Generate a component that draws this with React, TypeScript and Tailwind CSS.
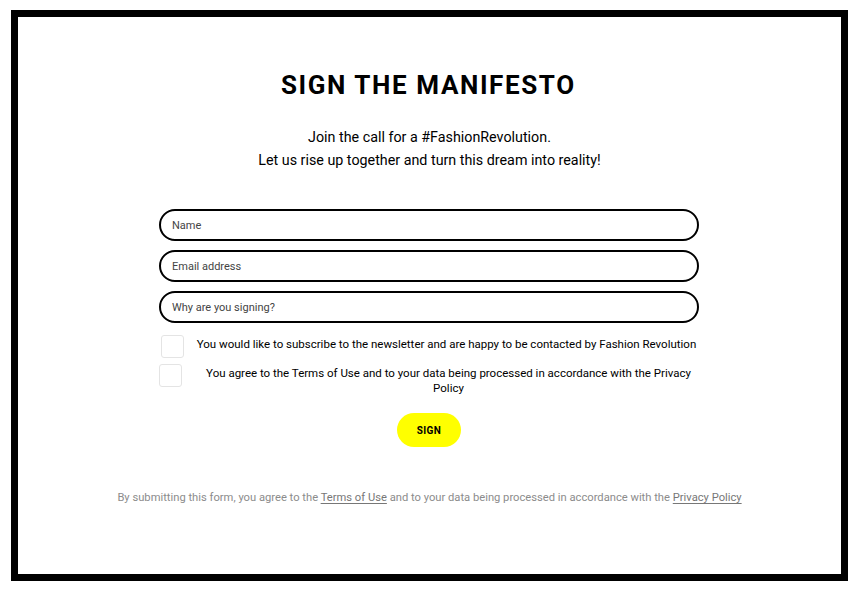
import React from "react";

export default function App() {
  return (
    <div className="bg-white w-[859px] h-[595px] pt-[10px] pl-[11px]" style={{ fontFamily: "Roboto, 'Liberation Sans', sans-serif" }}>
      <div className="w-[837px] h-[571px] border-[7px] border-black bg-white flex flex-col items-center">
        <h1 className="mt-[53px] text-[26px] leading-[30px] font-bold tracking-[1.6px] text-black pl-[1.6px] -ml-[4px]">
          SIGN THE MANIFESTO
        </h1>
        <div className="mt-[26px] text-center text-[14.3px] leading-[23px] text-black">
          <p>Join the call for a #FashionRevolution.</p>
          <p>Let us rise up together and turn this dream into reality!</p>
        </div>
        <form className="mt-[37px] w-[540px] -ml-[1px] flex flex-col">
          <input
            placeholder="Name"
            className="h-[32px] w-full rounded-full border-2 border-black px-[11px] text-[11px] text-black placeholder:text-[#444] outline-none"
          />
          <input
            placeholder="Email address"
            className="mt-[9px] h-[32px] w-full rounded-full border-2 border-black px-[11px] text-[11px] text-black placeholder:text-[#444] outline-none"
          />
          <input
            placeholder="Why are you signing?"
            className="mt-[9px] h-[32px] w-full rounded-full border-2 border-black px-[11px] text-[11px] text-black placeholder:text-[#444] outline-none"
          />
          <div className="mt-[12px] flex items-start">
            <span className="ml-[2px] w-[23px] h-[23px] rounded-[3px] border border-[#e4e4e4] shrink-0" />
            <p className="flex-1 ml-[10px] pt-[2px] text-center text-[11.5px] leading-[15px] text-black">
              You would like to subscribe to the newsletter and are happy to be contacted by Fashion Revolution
            </p>
          </div>
          <div className="mt-[6px] flex items-start">
            <span className="w-[23px] h-[23px] rounded-[3px] border border-[#e4e4e4] shrink-0" />
            <p className="flex-1 ml-[20px] mr-[4px] pt-[2px] text-center text-[11.5px] leading-[15px] text-black">
              You agree to the Terms of Use and to your data being processed in accordance with the Privacy Policy
            </p>
          </div>
          <div className="mt-[17px] flex justify-center">
            <button
              type="button"
              className="w-[64px] h-[34px] rounded-full bg-[#ffff00] text-[10px] font-bold tracking-[0.04em] text-black"
            >
              SIGN
            </button>
          </div>
        </form>
        <p className="mt-[44px] text-[11.2px] leading-[14px] text-[#8c8c8c] text-center">
          By submitting this form, you agree to the{" "}
          <a className="underline underline-offset-2 text-[#777]">Terms of Use</a> and to your data being processed in
          accordance with the <a className="underline underline-offset-2 text-[#777]">Privacy Policy</a>
        </p>
      </div>
    </div>
  );
}
